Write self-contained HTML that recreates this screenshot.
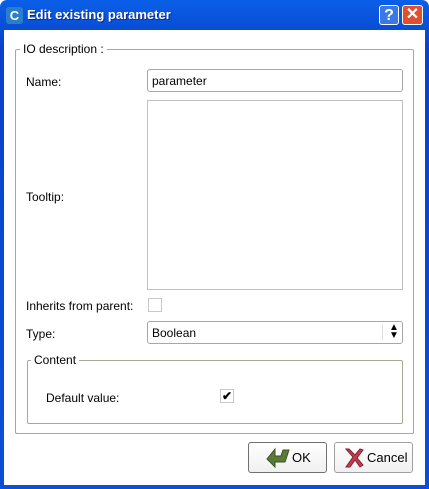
<html><head><style>
body{margin:0;width:429px;height:489px;overflow:hidden;font-family:"Liberation Sans",sans-serif;font-size:12px;color:#000}
.win{position:absolute;left:0;top:0;width:429px;height:489px;background:linear-gradient(#0a5fe8,#0842c8 10%,#0a4fd8);border-radius:7px 7px 0 0}
.body{position:absolute;left:4px;top:30px;right:4px;bottom:4px;background:#fff}
.a{position:absolute}
.gb{position:absolute;border:1px solid #a8a898;border-radius:2px}
.lbl{position:absolute;background:#fff;padding:0 3px}
.in{position:absolute;border:1px solid #a6a6a6;border-radius:3px;background:#fff;box-sizing:border-box}
.cb{position:absolute;width:12px;height:12px;border:1px solid #c8c8c8;background:#fff}
.btn{position:absolute;border:1px solid #707070;border-radius:3px;background:linear-gradient(#fff,#f0f0f0);box-sizing:border-box;font-size:13px}
</style></head><body>
<div class="win">
<div class="a" style="left:6px;top:7px;width:17px;height:17px;background:#2a7fc8;border-radius:3px;color:#fff;font-weight:bold;font-size:13px;text-align:center;line-height:17px">C</div>
<div class="a" style="left:27px;top:7px;color:#fff;font-weight:bold;font-size:13px;text-shadow:1px 1px #0a2a80">Edit existing parameter</div>
<div class="a" style="left:379px;top:5px;width:20px;height:20px;border:1px solid #fff;border-radius:3px;background:#3a78e8;color:#fff;font-weight:bold;font-size:16px;text-align:center;line-height:20px;box-sizing:border-box">?</div>
<div class="a" style="left:402px;top:5px;width:21px;height:20px;border:1px solid #fff;border-radius:3px;background:#e05030;color:#fff;font-weight:bold;font-size:16px;text-align:center;line-height:18px;box-sizing:border-box">✕</div>
<div class="body"></div>
</div>
<div class="gb" style="left:15px;top:49px;width:397px;height:383px"></div>
<div class="lbl" style="left:20px;top:42px;font-size:12px">IO description :</div>
<div class="a" style="left:26px;top:75px">Name:</div>
<div class="in" style="left:147px;top:69px;width:256px;height:23px;padding:4px 4px">parameter</div>
<div class="in" style="left:147px;top:100px;width:256px;height:190px;border-radius:0;border-color:#c0c0c0"></div>
<div class="a" style="left:26px;top:190px">Tooltip:</div>
<div class="a" style="left:26px;top:299px">Inherits from parent:</div>
<div class="cb" style="left:148px;top:298px"></div>
<div class="a" style="left:26px;top:327px">Type:</div>
<div class="in" style="left:147px;top:321px;width:256px;height:23px;padding:4px 4px">Boolean<span class="a" style="left:234px;top:3px;width:1px;height:15px;background:#ddd"></span><span class="a" style="left:241px;top:2px;font-size:10px;line-height:8px">▲<br>▼</span></div>
<div class="gb" style="left:27px;top:360px;width:374px;height:62px"></div>
<div class="lbl" style="left:31px;top:353px">Content</div>
<div class="a" style="left:46px;top:391px">Default value:</div>
<div class="cb" style="left:220px;top:389px;text-align:center;line-height:12px;font-size:12px;font-weight:bold">✔</div>
<div class="btn" style="left:248px;top:442px;width:79px;height:31px"><svg class="a" style="left:16px;top:3px" width="26" height="22"><path d="M10 3 L2 13 L10 21 L10 16 L20 16 L24 4 L18 4 L16 10 L10 10 Z" fill="#5a7a3a" stroke="#3a5020"/></svg><span class="a" style="left:43px;top:7px">OK</span></div>
<div class="btn" style="left:334px;top:442px;width:79px;height:31px;border-color:#a0a0a0"><svg class="a" style="left:8px;top:4px" width="22" height="22"><path d="M3 2 L10 10 L3 20 L7 20 L12 13 L17 20 L20 18 L14 11 L20 3 L17 2 L12 8 L6 2 Z" fill="#c04050" stroke="#802030"/></svg><span class="a" style="left:32px;top:7px">Cancel</span></div>
</body></html>
